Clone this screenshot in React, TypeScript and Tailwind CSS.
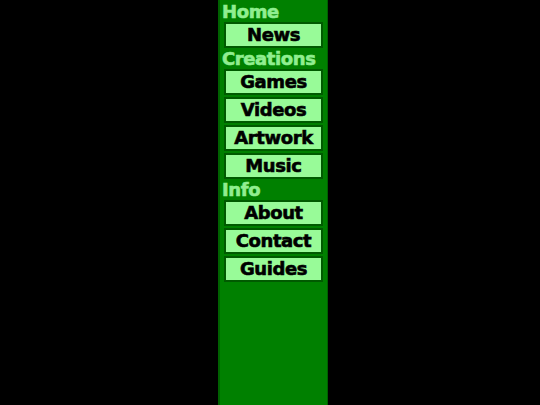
import React from "react";

const sections: { title: string; items: string[] }[] = [
  { title: "Home", items: ["News"] },
  { title: "Creations", items: ["Games", "Videos", "Artwork", "Music"] },
  { title: "Info", items: ["About", "Contact", "Guides"] },
];

export default function App() {
  return (
    <div className="w-[540px] h-[405px] bg-black overflow-hidden" style={{ fontFamily: '"DejaVu Sans", Verdana, sans-serif' }}>
      <nav className="ml-[218px] w-[110px] h-[405px] bg-[#008000] border-l-2 border-r border-[#006000] pl-[2px] pt-[1px]">
        {sections.map((s) => (
          <div key={s.title}>
            <div className="text-[18px] leading-[21px] h-[21px] font-bold tracking-[-0.4px] [-webkit-text-stroke:0.6px_#90ee90] text-[#90ee90]">{s.title}</div>
            <div className="flex flex-col gap-[2px] pl-[2px] w-[101px]">
              {s.items.map((it) => (
                <div key={it} className="h-[26px] bg-[#98fb98] border-2 border-[#005a00] flex items-center justify-center text-[18px] font-bold tracking-[-0.4px] [-webkit-text-stroke:0.6px_#000] text-black leading-none">
                  {it}
                </div>
              ))}
            </div>
          </div>
        ))}
      </nav>
    </div>
  );
}
